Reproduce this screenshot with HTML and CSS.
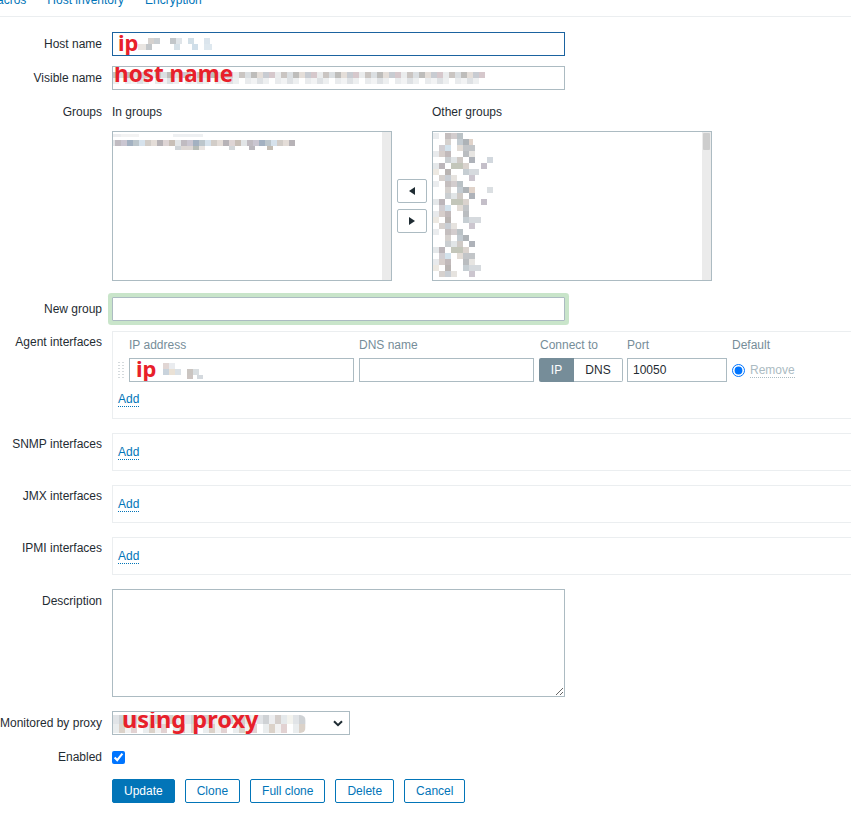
FILE: index.html
```html
<!DOCTYPE html>
<html lang="en">
<head>
<meta charset="utf-8">
<title>Host</title>
<link rel="stylesheet" href="styles.css">
</head>
<body>
<div class="tabs">
  <span class="tab">Macros</span>
  <span class="tab">Host inventory</span>
  <span class="tab">Encryption</span>
</div>

<form class="form">
  <div class="row">
    <label class="lbl">Host name</label>
    <div class="fld">
      <div class="inp inp-focus wide">
        <span class="mosaic m-host"></span>
        <span class="red red-ip">ip</span>
      </div>
    </div>
  </div>

  <div class="row">
    <label class="lbl">Visible name</label>
    <div class="fld">
      <div class="inp wide">
        <span class="mosaic m-visible"></span>
        <span class="red red-host">host name</span>
      </div>
    </div>
  </div>

  <div class="row row-groups">
    <label class="lbl">Groups</label>
    <div class="fld groups">
      <div class="gcol">
        <div class="ghead">In groups</div>
        <div class="listbox">
          <span class="mosaic m-ingroups"></span>
          <div class="sb"></div>
        </div>
      </div>
      <div class="arrows">
        <button type="button" class="abtn"><svg width="6" height="8" viewBox="0 0 6 8"><path d="M6 0 L0 4 L6 8 Z" fill="#1f2c33"/></svg></button>
        <button type="button" class="abtn"><svg width="6" height="8" viewBox="0 0 6 8"><path d="M0 0 L6 4 L0 8 Z" fill="#1f2c33"/></svg></button>
      </div>
      <div class="gcol">
        <div class="ghead">Other groups</div>
        <div class="listbox">
          <div class="mcol">
            <span class="mr mr-a w1"></span>
            <span class="mr mr-b w2"></span>
            <span class="mr mr-c w3"></span>
            <span class="mr mr-d w4"></span>
            <span class="mr mr-a w5"></span>
            <span class="mr mr-c w2"></span>
            <span class="mr mr-b w6"></span>
            <span class="mr mr-d w3"></span>
            <span class="mr mr-a w6"></span>
            <span class="mr mr-c w4"></span>
            <span class="mr mr-b w2"></span>
            <span class="mr mr-d w5"></span>
          </div>
          <div class="sb"><div class="thumb"></div></div>
        </div>
      </div>
    </div>
  </div>

  <div class="row row-newgroup">
    <label class="lbl">New group</label>
    <div class="fld">
      <div class="inp wide hl"></div>
    </div>
  </div>

  <div class="row row-box">
    <label class="lbl lbl-box">Agent interfaces</label>
    <div class="fld fld-box">
      <div class="ibox ibox-agent">
        <div class="ihead">
          <span class="c-handle"></span>
          <span class="c-ip">IP address</span>
          <span class="c-dns">DNS name</span>
          <span class="c-conn">Connect to</span>
          <span class="c-port">Port</span>
          <span class="c-def">Default</span>
        </div>
        <div class="irow">
          <span class="c-handle"><span class="handle"></span></span>
          <span class="c-ip"><span class="inp inp-ip"><span class="mosaic m-ip"></span><span class="red red-ip2">ip</span></span></span>
          <span class="c-dns"><span class="inp inp-dns"></span></span>
          <span class="c-conn seg"><span class="seg-ip">IP</span><span class="seg-dns">DNS</span></span>
          <span class="c-port"><span class="inp inp-port">10050</span></span>
          <span class="c-def"><input type="radio" class="radio" checked><span class="remove">Remove</span></span>
        </div>
        <a class="add">Add</a>
      </div>
    </div>
  </div>

  <div class="row row-box">
    <label class="lbl lbl-box">SNMP interfaces</label>
    <div class="fld fld-box"><div class="ibox"><a class="add">Add</a></div></div>
  </div>

  <div class="row row-box">
    <label class="lbl lbl-box">JMX interfaces</label>
    <div class="fld fld-box"><div class="ibox"><a class="add">Add</a></div></div>
  </div>

  <div class="row row-box">
    <label class="lbl lbl-box">IPMI interfaces</label>
    <div class="fld fld-box"><div class="ibox"><a class="add">Add</a></div></div>
  </div>

  <div class="row row-desc">
    <label class="lbl">Description</label>
    <div class="fld"><textarea class="ta"></textarea></div>
  </div>

  <div class="row">
    <label class="lbl">Monitored by proxy</label>
    <div class="fld">
      <div class="inp sel">
        <span class="mosaic m-proxy"></span>
        <span class="red red-proxy">using proxy</span>
        <svg class="chev" width="10" height="7" viewBox="0 0 10 7"><path d="M1 1.2 L5 5.2 L9 1.2" fill="none" stroke="#1f2c33" stroke-width="2"/></svg>
      </div>
    </div>
  </div>

  <div class="row">
    <label class="lbl">Enabled</label>
    <div class="fld fld-check"><input type="checkbox" class="check" checked></div>
  </div>

  <div class="row buttons">
    <div class="lbl"></div>
    <div class="fld btns">
      <button type="button" class="btn btn-main">Update</button>
      <button type="button" class="btn">Clone</button>
      <button type="button" class="btn">Full clone</button>
      <button type="button" class="btn">Delete</button>
      <button type="button" class="btn">Cancel</button>
    </div>
  </div>
</form>
</body>
</html>
```
FILE: styles.css
```css
html, body {
  margin: 0;
  padding: 0;
  overflow: hidden;
  background: #fff;
}
body {
  font-family: "Liberation Sans", Arial, sans-serif;
  font-size: 12px;
  line-height: 14px;
  color: #1f2c33;
  width: 851px;
  height: 816px;
}

/* tabs */
.tabs {
  display: flex;
  gap: 21px;
  height: 16px;
  border-bottom: 1px solid #ebeef0;
  margin-left: -13px;
}
.tab {
  color: #0275b8;
  line-height: 14px;
  margin-top: -7px;
  white-space: nowrap;
}

/* form rows */
.form {
  padding-top: 15px;
}
.row {
  display: flex;
  margin-bottom: 10px;
}
.lbl {
  flex: none;
  width: 102px;
  text-align: right;
  padding-top: 5px;
  white-space: nowrap;
}
.lbl-box {
  padding-top: 4px;
}
.fld {
  margin-left: 10px;
  flex: 1;
  min-width: 0;
}

/* inputs */
.inp {
  box-sizing: border-box;
  display: block;
  height: 24px;
  border: 1px solid #acbbc2;
  background: #fff;
  position: relative;
  overflow: hidden;
}
.wide {
  width: 453px;
}
.inp-focus {
  border-color: #1b63a0;
}
.hl {
  box-shadow: 0 0 0 4px #c9e5ca;
  border-radius: 1px;
}
.row-groups {
  margin-bottom: 16px;
}
.row-newgroup {
  margin-bottom: 10px;
}

/* red overlay texts */
.red {
  position: absolute;
  font-family: "Noto Sans", "Open Sans", sans-serif;
  font-weight: 700;
  color: #e8202a;
  white-space: nowrap;
  line-height: 1;
}
.red-ip {
  left: 5px;
  top: -2px;
  font-size: 22px;
}
.red-host {
  left: 1px;
  top: -4px;
  font-size: 22.5px;
}
.red-ip2 {
  left: 6px;
  top: -2px;
  font-size: 22px;
}
.red-proxy {
  left: 9px;
  top: -4px;
  font-size: 23.5px;
}

/* pixelated blur imitation */
.mosaic {
  position: absolute;
  display: block;
  opacity: 0.75;
}
.m-host {
  left: 5px;
  top: 5px;
  width: 98px;
  height: 12px;
  background:
    linear-gradient(90deg, transparent 0 30px, #c9c3c0 30px 36px, #b9bfc5 36px 42px, transparent 42px 52px, #aeb3b8 52px 58px, #d6dde2 58px 64px, transparent 64px 70px, #c4d5e0 70px 76px, transparent 76px 86px, #cfdde7 86px 92px, transparent 92px) 0 0 / 100% 6px no-repeat,
    linear-gradient(90deg, transparent 0 20px, #e2ddd8 20px 28px, #b0b5b9 28px 34px, transparent 34px 56px, #c8d6df 56px 62px, transparent 62px 74px, #bfd3e2 74px 80px, transparent 80px 86px, #d3e1ea 86px 94px, transparent 94px) 0 6px / 100% 6px no-repeat;
}
.m-visible {
  left: 0;
  top: 3px;
  width: 372px;
  height: 18px;
  background:
    repeating-linear-gradient(90deg, #b9b2ae 0 6px, #cfd5d9 6px 12px, #a9a7a5 12px 18px, #dcd3cd 18px 24px, #b6bcc3 24px 30px, #c9b6bb 30px 36px, #e3e6e8 36px 42px) 0 2px / 100% 6px no-repeat,
    repeating-linear-gradient(90deg, #e7eaec 0 6px, #ffffff 6px 12px, #e2e5e7 12px 18px, #eef0f1 18px 24px, #d4d8db 24px 30px) 0 8px / 100% 6px no-repeat;
}
.m-ingroups {
  left: -4px;
  top: 2px;
  width: 186px;
  height: 16px;
  background:
    linear-gradient(90deg, #e6e8ea 0 12px, #f0f0f0 12px 30px, transparent 30px 64px, #e9ebee 64px 94px, transparent 94px) 0 0 / 100% 3px no-repeat,
    repeating-linear-gradient(90deg, #d9dde0 0 6px, #aba5ad 6px 12px, #b9b3c2 12px 18px, #8597ad 18px 24px, #a6b3bb 24px 30px, #c9d9e6 30px 36px, #c3bdb6 36px 42px, #dcd2cc 42px 48px, #a09aa0 48px 54px, #d4c7c7 54px 60px, #b6aaa0 60px 66px) 0 6px / 100% 6px no-repeat,
    linear-gradient(90deg, transparent 0 66px, #bfc6cc 66px 72px, #d4cbc8 72px 84px, #9fa7a0 84px 90px, #e2dcd8 90px 96px, transparent 96px 120px, #c3c9cd 120px 126px, transparent 126px 140px, #a49fa7 140px 146px, transparent 146px 158px, #afa79c 158px 164px, transparent 164px) 0 12px / 100% 5px no-repeat;
}

/* other groups mosaic column */
.mcol {
  position: absolute;
  left: 0;
  top: 1px;
  display: flex;
  flex-direction: column;
  opacity: 0.8;
}
.mr {
  display: block;
  height: 12px;
}
.w1 { width: 40px; }
.w2 { width: 54px; }
.w3 { width: 62px; }
.w4 { width: 46px; }
.w5 { width: 68px; }
.w6 { width: 36px; }
.mr-a {
  background:
    linear-gradient(90deg, #e6e8ea 0 6px, transparent 6px 12px, #b6aeae 12px 18px, #c9c1c3 18px 24px, #aab4b8 24px 30px, transparent 30px) 0 0 / 100% 6px no-repeat,
    linear-gradient(90deg, transparent 0 12px, #cbc6c2 12px 18px, transparent 18px 24px, #b5bfc6 24px 30px, #9aa1a6 30px 36px, #d9c9bd 36px 42px, transparent 42px 54px, #d3d8dc 54px 60px, transparent 60px) 0 6px / 100% 6px no-repeat;
}
.mr-b {
  background:
    linear-gradient(90deg, transparent 0 6px, #c6c3c8 6px 12px, #c9dbe8 12px 18px, transparent 18px 24px, #dbd4cc 24px 30px, #b3b7bb 30px 42px, transparent 42px) 0 0 / 100% 6px no-repeat,
    linear-gradient(90deg, #e3e6e8 0 6px, #ccc3bf 6px 12px, #b2a8aa 12px 18px, transparent 18px 30px, #a9adb1 30px 36px, #e2dfdc 36px 42px, transparent 42px) 0 6px / 100% 6px no-repeat;
}
.mr-c {
  background:
    linear-gradient(90deg, transparent 0 12px, #bec2c6 12px 18px, #dadfe2 18px 24px, #c4beb9 24px 30px, transparent 30px 36px, #9b9fa8 36px 42px, transparent 42px 54px, #c8cfd6 54px 60px, transparent 60px) 0 0 / 100% 6px no-repeat,
    linear-gradient(90deg, #dfe3e5 0 6px, #aca5a9 6px 12px, transparent 12px 18px, #b5b8aa 18px 30px, #d1c9c2 30px 36px, transparent 36px 48px, #b6b0bc 48px 54px, transparent 54px) 0 6px / 100% 6px no-repeat;
}
.mr-d {
  background:
    linear-gradient(90deg, #e9e4dc 0 6px, transparent 6px 12px, #a8a2a0 12px 18px, transparent 18px 30px, #b9c2c9 30px 36px, #ccd1d6 36px 48px, transparent 48px) 0 0 / 100% 6px no-repeat,
    linear-gradient(90deg, transparent 0 6px, #cdc6c2 6px 12px, #bcc3ca 12px 18px, #e0ddd8 18px 24px, transparent 24px 36px, #c0b8c4 36px 42px, transparent 42px) 0 6px / 100% 6px no-repeat;
}

.m-ip {
  left: 5px;
  top: 4px;
  width: 70px;
  height: 16px;
  background:
    linear-gradient(90deg, transparent 0 28px, #d8c9c6 28px 34px, #e3e6ea 34px 40px, transparent 40px 70px) 0 0 / 100% 6px no-repeat,
    linear-gradient(90deg, transparent 0 28px, #b8c5d1 28px 34px, #e4d7c8 34px 40px, #cfd7de 40px 46px, #ffffff 46px 52px, #b9b2ad 52px 58px, #cdd3d8 58px 64px, transparent 64px) 0 6px / 100% 6px no-repeat,
    linear-gradient(90deg, transparent 0 52px, #bdb2ae 52px 58px, transparent 58px 62px, #c6cdd3 62px 68px, transparent 68px) 0 12px / 100% 4px no-repeat;
}
.m-proxy {
  left: 0;
  top: 3px;
  width: 193px;
  height: 18px;
  background:
    repeating-linear-gradient(90deg, #d8dcdf 0 6px, #bfc4c8 6px 12px, #e7e9eb 12px 18px, #c7c0bc 18px 24px, #dde2e5 24px 30px, #f0efe9 30px 36px) 0 0 / 100% 9px no-repeat,
    repeating-linear-gradient(90deg, #e4e7e9 0 6px, #cfc3b8 6px 12px, #eeeeee 12px 18px, #d9c4c4 18px 24px, #ffffff 24px 30px) 0 9px / 100% 9px no-repeat;
  border-radius: 0 6px 6px 0;
}

/* groups */
.groups {
  display: flex;
  align-items: flex-end;
}
.gcol {
  width: 280px;
}
.ghead {
  padding-top: 5px;
  margin-bottom: 12px;
  white-space: nowrap;
}
.listbox {
  box-sizing: border-box;
  position: relative;
  width: 280px;
  height: 150px;
  border: 1px solid #acbbc2;
  background: #fff;
  overflow: hidden;
}
.sb {
  position: absolute;
  right: 0;
  top: 0;
  bottom: 0;
  width: 9px;
  background: #ebebeb;
}
.thumb {
  margin: 1px 1px 0 1px;
  height: 17px;
  background: #cdcdcd;
  border-radius: 1px;
}
.arrows {
  width: 30px;
  margin: 0 5px;
  height: 150px;
  display: flex;
  flex-direction: column;
  justify-content: center;
  gap: 6px;
}
.abtn {
  box-sizing: border-box;
  width: 30px;
  height: 24px;
  padding: 0;
  border: 1px solid #acbbc2;
  border-radius: 2px;
  background: #fff;
  display: flex;
  align-items: center;
  justify-content: center;
}

/* interface boxes */
.row-box {
  margin-bottom: 14px;
}
.fld-box {
  margin-right: -30px;
}
.ibox {
  box-sizing: border-box;
  border: 1px solid #ebeef0;
  padding: 11px 0 10px 5px;
  height: 38px;
}
.ibox-agent {
  height: 88px;
  padding-top: 6px;
}
.ihead, .irow {
  display: flex;
  align-items: center;
}
.ihead {
  color: #768d99;
  height: 14px;
  margin-bottom: 6px;
  white-space: nowrap;
}
.irow {
  height: 24px;
  margin-bottom: 10px;
}
.c-handle {
  width: 11px;
  flex: none;
  display: flex;
  align-items: center;
}
.c-ip { width: 225px; margin-right: 5px; flex: none; }
.c-dns { width: 175px; margin-right: 5px; flex: none; }
.c-conn { width: 84px; margin-right: 4px; flex: none; padding-left: 1px; box-sizing: border-box; }
.irow .c-conn { padding-left: 0; }
.c-port { width: 100px; margin-right: 5px; flex: none; }
.c-def { flex: none; display: flex; align-items: center; }

.handle {
  display: block;
  width: 6px;
  height: 19px;
  background-image: radial-gradient(circle, #d5dadd 0.9px, transparent 1.1px);
  background-size: 4px 3px;
  background-position: -1px 0;
}
.inp-ip, .inp-dns, .inp-port {
  width: 100%;
}
.inp-port {
  padding-left: 5px;
  line-height: 22px;
  color: #1f2c33;
}
.seg {
  display: flex;
  height: 24px;
}
.seg-ip {
  width: 35px;
  background: #768d99;
  color: #fff;
  text-align: center;
  line-height: 24px;
  border-radius: 2px 0 0 2px;
}
.seg-dns {
  box-sizing: border-box;
  width: 49px;
  border: 1px solid #acbbc2;
  border-left: none;
  border-radius: 0 2px 2px 0;
  text-align: center;
  line-height: 22px;
  color: #1f2c33;
}
.radio {
  margin: 0 5px 0 0;
  width: 13px;
  height: 13px;
}
.remove {
  color: #acbbc2;
  border-bottom: 1px dotted #acbbc2;
  line-height: 14px;
}
.add {
  display: inline-block;
  color: #0275b8;
  line-height: 14px;
  border-bottom: 1px dotted #0275b8;
  cursor: pointer;
}

/* description */
.row-desc {
  margin-bottom: 14px;
}
.ta {
  box-sizing: border-box;
  display: block;
  width: 453px;
  height: 108px;
  margin: 0;
  border: 1px solid #acbbc2;
  border-radius: 0;
  font: inherit;
  padding: 4px 5px;
}

/* select */
.sel {
  width: 238px;
}
.chev {
  position: absolute;
  right: 6px;
  top: 8px;
}

/* checkbox */
.fld-check {
  height: 24px;
  display: flex;
  align-items: center;
}
.check {
  margin: 0;
  width: 13px;
  height: 13px;
}

/* buttons */
.btns {
  display: flex;
  gap: 10px;
}
.btn {
  box-sizing: border-box;
  height: 24px;
  padding: 0 11px;
  border: 1px solid #0275b8;
  border-radius: 2px;
  background: #fff;
  color: #0275b8;
  font-family: "Liberation Sans", Arial, sans-serif;
  font-size: 12px;
}
.btn-main {
  background: #0275b8;
  color: #fff;
}
```
